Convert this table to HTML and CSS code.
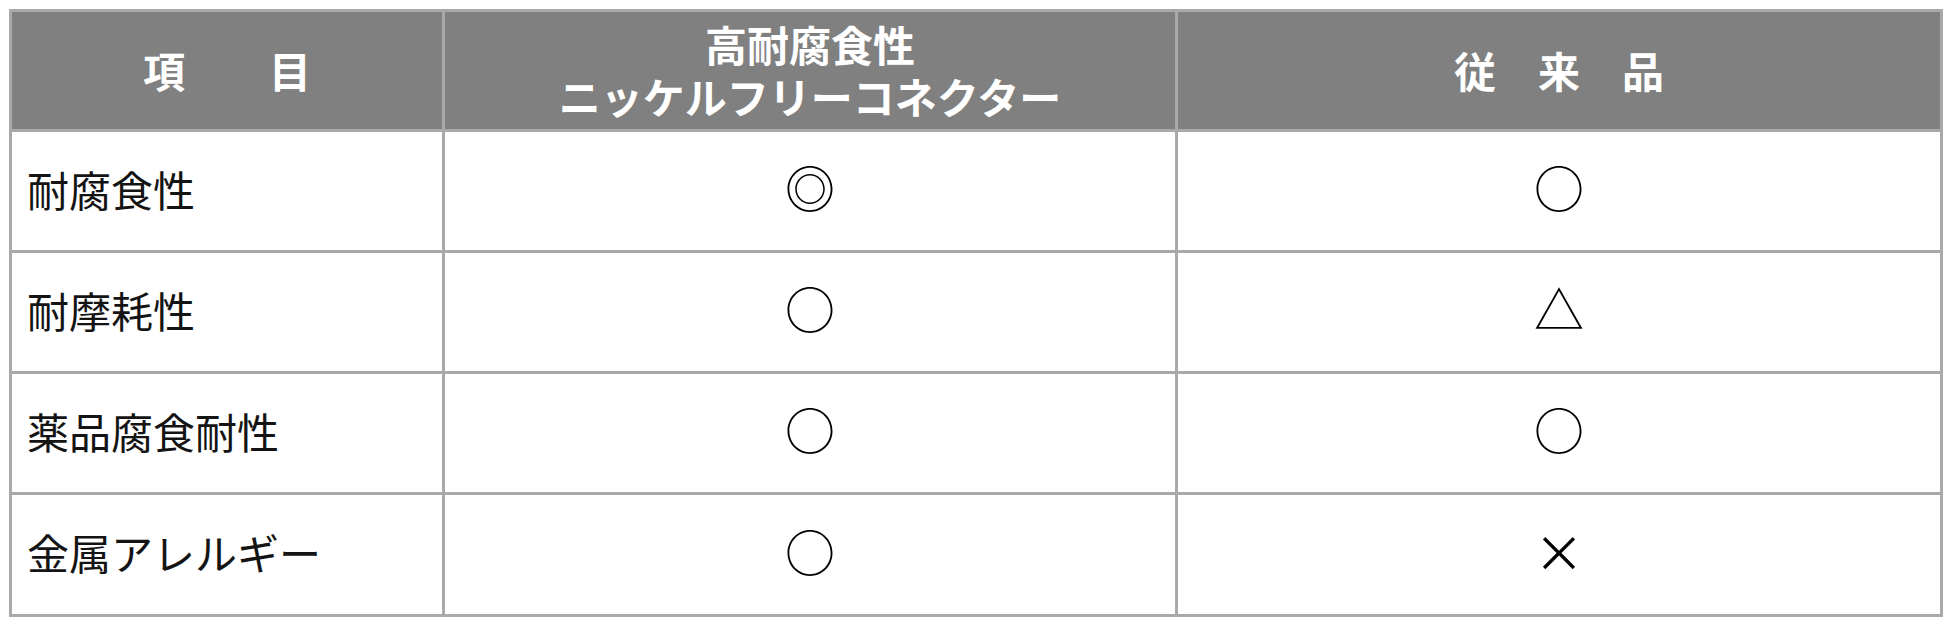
FILE: index.html
```html
<!DOCTYPE html>
<html lang="ja">
<head>
<meta charset="utf-8">
<title>比較表</title>
<link rel="stylesheet" href="styles.css">
</head>
<body>
<div class="table">
  <div class="cell head">項　　目</div>
  <div class="cell head">高耐腐食性<br>ニッケルフリーコネクター</div>
  <div class="cell head">従　来　品</div>

  <div class="cell label">耐腐食性</div>
  <div class="cell mark">◎</div>
  <div class="cell mark">○</div>

  <div class="cell label">耐摩耗性</div>
  <div class="cell mark">○</div>
  <div class="cell mark">△</div>

  <div class="cell label">薬品腐食耐性</div>
  <div class="cell mark">○</div>
  <div class="cell mark">○</div>

  <div class="cell label">金属アレルギー</div>
  <div class="cell mark">○</div>
  <div class="cell mark">×</div>
</div>
</body>
</html>
```

FILE: styles.css
```css
html, body {
  margin: 0;
  padding: 0;
  background: #ffffff;
}

body {
  padding: 9px;
  font-family: "Noto Sans CJK JP", "Noto Sans", sans-serif;
  color: #000000;
}

.table {
  display: grid;
  grid-template-columns: 430px 730px 762px;
  grid-template-rows: 117px 118px 118px 118px 119px;
  gap: 3px;
  padding: 3px;
  width: 1928px;
  background: #a9a9a9;
}

.cell {
  background: #ffffff;
  display: flex;
  align-items: center;
  font-size: 42px;
  line-height: 1.2;
  box-sizing: border-box;
}

.head {
  background: #808080;
  color: #ffffff;
  font-weight: 700;
  justify-content: center;
  text-align: center;
  line-height: 1.22;
  padding-bottom: 2px;
}

.label {
  padding-left: 15px;
  padding-bottom: 4px;
  font-weight: 400;
  color: #141414;
}

.mark {
  justify-content: center;
  font-size: 50px;
  padding-bottom: 10px;
}
```
